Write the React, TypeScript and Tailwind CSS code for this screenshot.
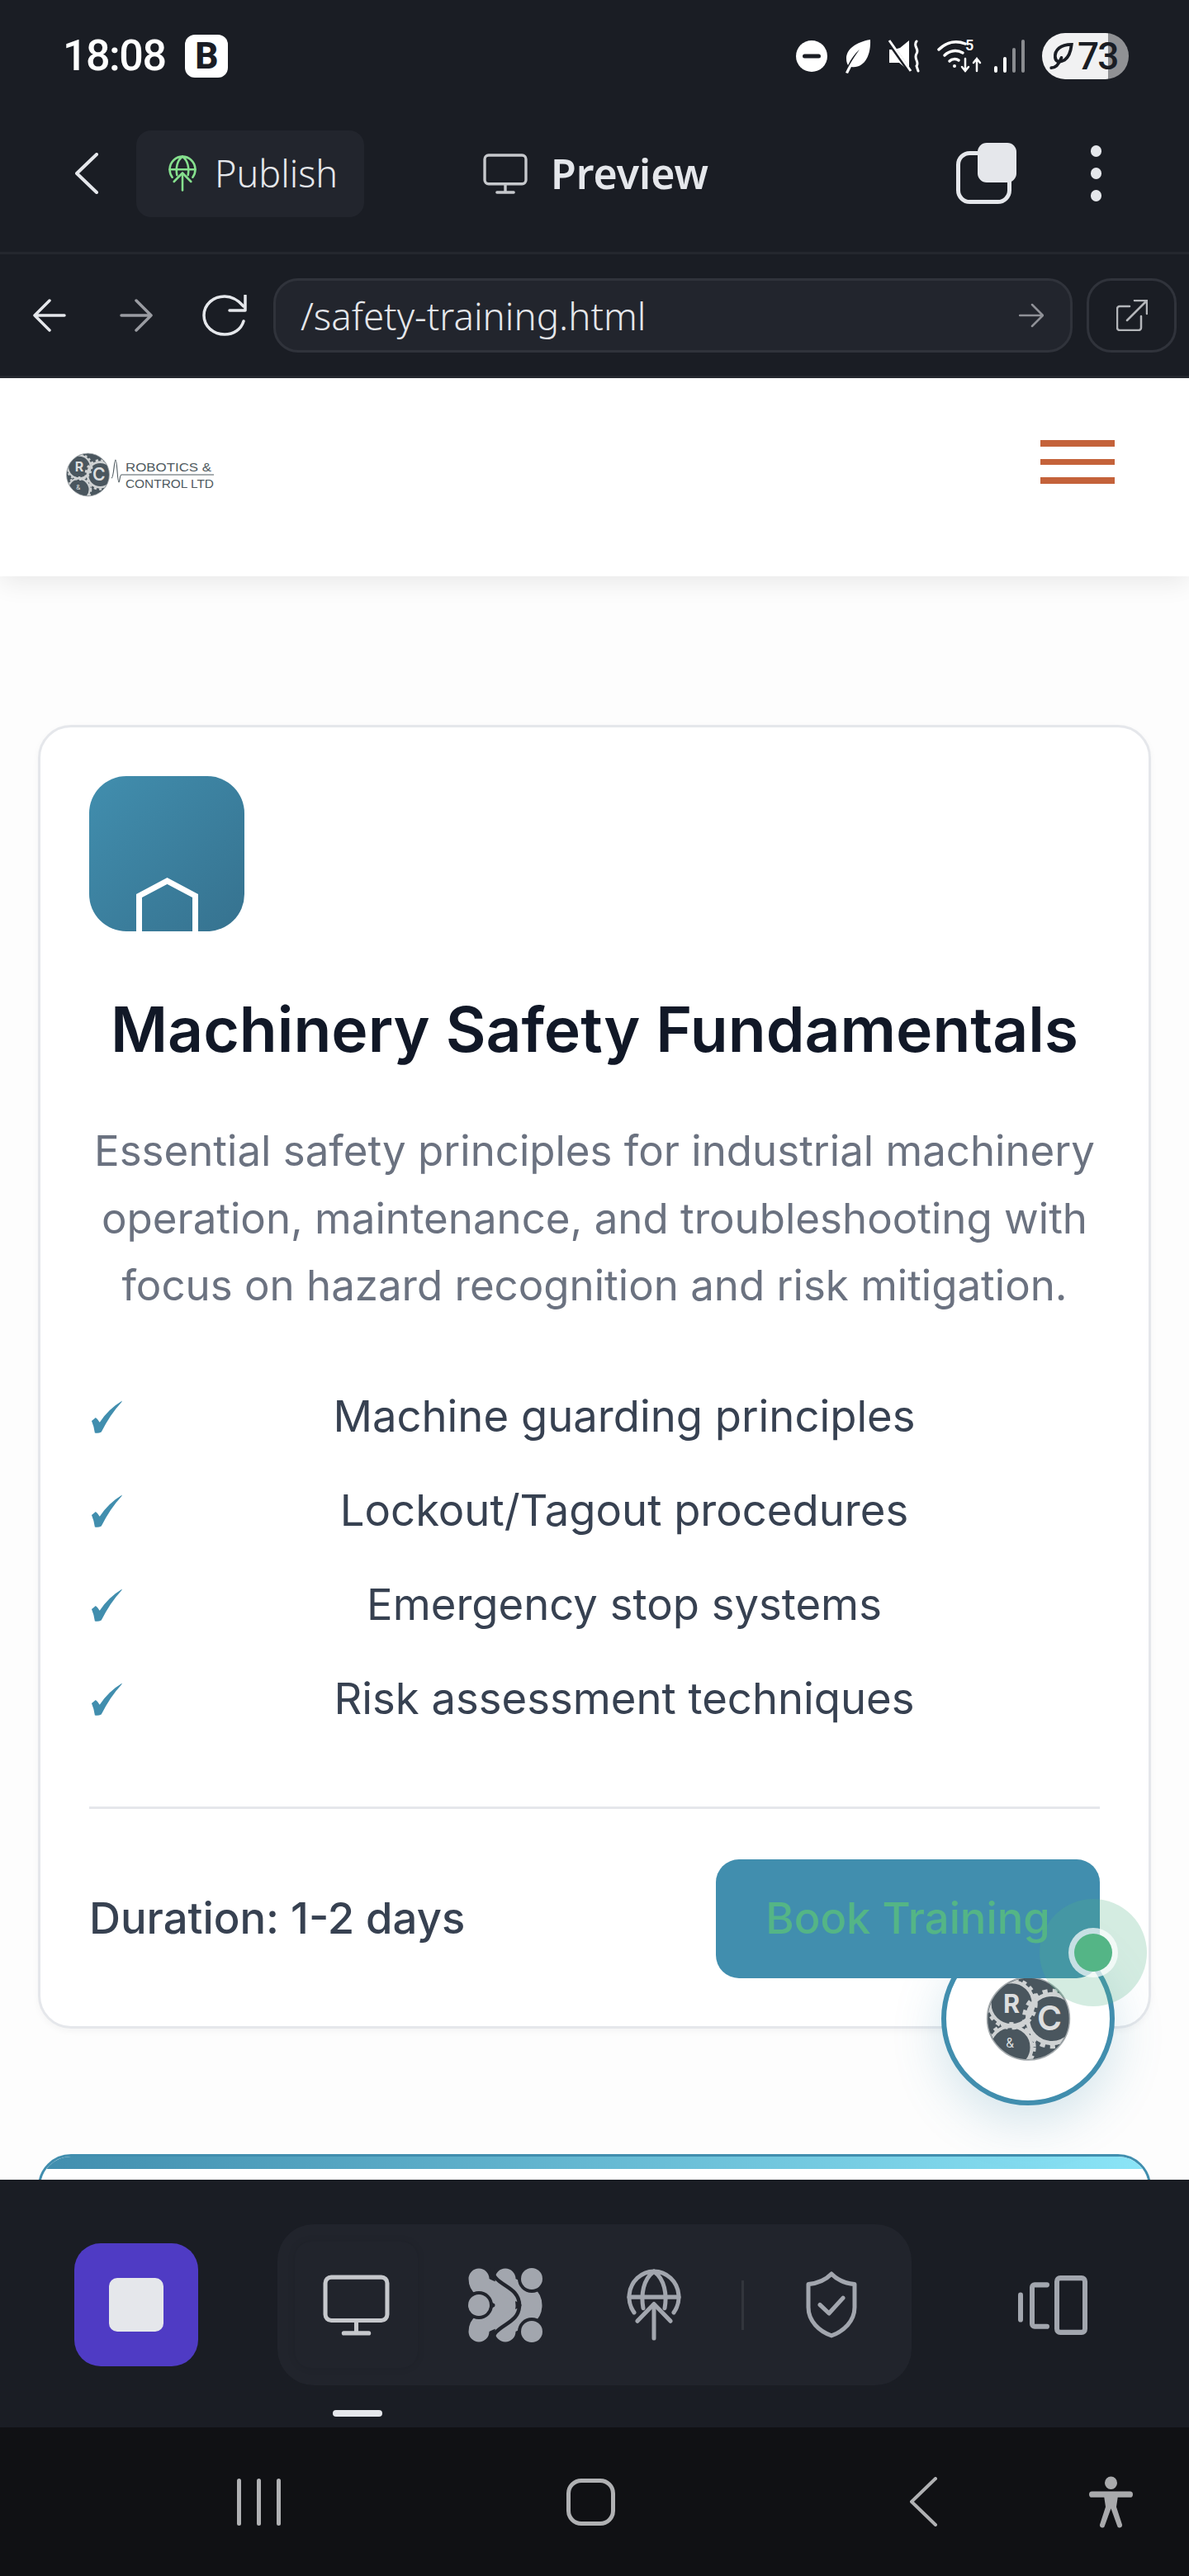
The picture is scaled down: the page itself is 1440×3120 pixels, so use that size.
import { useId } from 'react'

const features = [
  'Machine guarding principles',
  'Lockout/Tagout procedures',
  'Emergency stop systems',
  'Risk assessment techniques',
]

function LogoMark({ className }: { className: string }) {
  const clipId = useId()
  return (
    <svg viewBox="0 0 100 100" className={className}>
      <defs>
        <clipPath id={clipId}>
          <circle cx="50" cy="50" r="48" />
        </clipPath>
      </defs>
      <circle cx="50" cy="50" r="49" fill="#4a565e" stroke="#a5abae" strokeWidth="1.5" />
      <g fill="none" stroke="#cfd2d3" clipPath={`url(#${clipId})`}>
        <circle cx="30" cy="32" r="26" strokeWidth="4" />
        <circle cx="30" cy="32" r="29" strokeWidth="4" strokeDasharray="5 5" />
        <circle cx="29" cy="84" r="25" strokeWidth="4" />
        <circle cx="29" cy="84" r="28" strokeWidth="4" strokeDasharray="5 5" />
        <circle cx="78" cy="50" r="29" strokeWidth="5" />
        <circle cx="78" cy="50" r="33" strokeWidth="5" strokeDasharray="6 6" />
      </g>
      <text x="30" y="43" textAnchor="middle" fontFamily="Inter, sans-serif" fontWeight="700" fontSize="30" fill="#dcdedf">R</text>
      <text x="75" y="64" textAnchor="middle" fontFamily="Inter, sans-serif" fontWeight="600" fontSize="40" fill="#dcdedf">C</text>
      <text x="28" y="84" textAnchor="middle" fontFamily="Inter, sans-serif" fontSize="15" fill="#dcdedf">&amp;</text>
    </svg>
  )
}

function SiteLogo() {
  return (
    <div className="flex items-center">
      <LogoMark className="w-[53px] h-[56px]" />
      <svg viewBox="0 0 125 40" className="w-[125px] h-[40px] ml-[2px] overflow-visible">
        <path d="M0 24 C3 24 3 2 5 2 C7 2 7 29 9 29 C10 29 10 20 12 20 H124" fill="none" stroke="#4f5a60" strokeWidth="1.1" />
        <text x="17" y="16" fontFamily="'Liberation Sans', sans-serif" fontSize="15" fill="#4f5a60" textLength="104" lengthAdjust="spacingAndGlyphs">ROBOTICS &amp;</text>
        <text x="17" y="36" fontFamily="'Liberation Sans', sans-serif" fontSize="15" fill="#4f5a60" textLength="107" lengthAdjust="spacingAndGlyphs">CONTROL LTD</text>
      </svg>
    </div>
  )
}

function GlobeUp({ className, stroke }: { className: string; stroke: string }) {
  return (
    <svg viewBox="0 0 66 84" preserveAspectRatio="none" className={className} fill="none" stroke={stroke} strokeWidth={5} strokeLinecap="round" strokeLinejoin="round">
      <path d="M9 51 A30 30 0 1 1 57 51" />
      <path d="M33 3 C20 12 17 30 20 46" />
      <path d="M33 3 C46 12 49 30 46 46" />
      <path d="M3 33 H63" />
      <path d="M33 81 V42" />
      <path d="M13 61 L33 41 L53 61" />
    </svg>
  )
}

function Monitor({ className, stroke }: { className: string; stroke: string }) {
  return (
    <svg viewBox="0 0 80 72" preserveAspectRatio="none" className={className} fill="none" stroke={stroke} strokeWidth={5} strokeLinecap="round" strokeLinejoin="round">
      <rect x="3" y="3" width="74" height="51" rx="7" />
      <path d="M40 54 V68" />
      <path d="M25 69 H55" />
    </svg>
  )
}

function CheckGlyph() {
  return (
    <svg viewBox="0 0 40 40" className="w-[39px] h-[40px]" fill="#418eae">
      <path d="M1 25 L6 21 Q9 23 11 27 Q21 11 39 0 L38 2 Q24 17 13 39 Q9 41 5 40 Q4 32 1 25Z" />
    </svg>
  )
}

function StatusIcons() {
  return (
    <div className="flex items-center">
      <svg viewBox="0 0 38 38" className="w-[38px] h-[38px]">
        <circle cx="19" cy="19" r="19" fill="#fff" />
        <rect x="8" y="16.5" width="22" height="5" rx="2.5" fill="#1a1d24" />
      </svg>
      <svg viewBox="0 0 34 42" className="w-[34px] h-[42px] ml-[19px]" fill="#fff">
        <path d="M33 1 C16 4 4 12 4 24 C4 28 5 30 6 32 C10 24 14 18 20 13 C15 20 8 30 3 41 L6 42 L10 34 C26 36 34 20 33 1Z" />
      </svg>
      <svg viewBox="0 0 40 40" className="w-[40px] h-[40px] ml-[20px]" fill="none" stroke="#fff">
        <path d="M15 10 L26 1 V38 L14 28 H2 V12 H8Z" fill="#fff" stroke="none" />
        <path d="M1 2 L27 39" strokeWidth="5" stroke="#1a1d24" />
        <path d="M2 1 L28 38" strokeWidth="3" />
        <path d="M35 2 C30 8 39 11 35 17 C31 23 39 27 35 32 L37 38" strokeWidth="3" strokeLinecap="round" />
      </svg>
      <div className="relative w-[56px] h-[42px] ml-[20px]">
        <svg viewBox="0 0 56 42" className="w-[56px] h-[42px]" fill="none" stroke="#fff" strokeWidth="3.5" strokeLinecap="round">
          <path d="M2 13 C12 3 24 2 34 6" />
          <path d="M9 20 C15 14 24 13 31 17" />
          <path d="M15 27 C18 24 23 24 26 26" />
          <circle cx="21" cy="33" r="2" fill="#fff" stroke="none" />
          <path d="M34 24 V39 M30 34 L34 39 L38 34" strokeWidth="2.5" />
          <path d="M48 39 V24 M44 29 L48 24 L52 29" strokeWidth="2.5" />
        </svg>
        <span className="absolute left-[34px] top-[-4px] text-[18px] leading-[24px] font-semibold text-white font-['Roboto',sans-serif]">5</span>
      </div>
      <svg viewBox="0 0 38 40" className="w-[38px] h-[40px] ml-[13px]">
        <rect x="0" y="32" width="4" height="8" rx="2" fill="#fff" />
        <rect x="11" y="21" width="4" height="19" rx="2" fill="#fff" />
        <rect x="22" y="10" width="4" height="30" rx="2" fill="#8a8c90" />
        <rect x="33" y="0" width="4" height="40" rx="2" fill="#8a8c90" />
      </svg>
      <div className="flex items-center w-[105px] h-[56px] ml-[20px] rounded-full pl-[9px] bg-[linear-gradient(90deg,#f1f1f2_0%,#f1f1f2_76%,#909194_76%,#909194_100%)]">
        <svg viewBox="0 0 30 36" className="w-[29px] h-[34px]" fill="none" stroke="#1a1d24" strokeWidth="4" strokeLinecap="round">
          <path d="M28 3 C14 3 6 10 7 20 C8 26 14 26 19 23 C25 19 27 12 28 3Z" />
          <path d="M2 33 C8 33 12 28 15 20" />
        </svg>
        <span className="ml-[5px] text-[46px] leading-[56px] text-[#1a1d24] tracking-[-2px] font-['Roboto',sans-serif] font-medium">73</span>
      </div>
    </div>
  )
}

function DotsMark({ className }: { className: string }) {
  return (
    <svg viewBox="0 0 90 90" className={className}>
      <g fill="none" stroke="#a2a6ae" strokeWidth="25" strokeLinecap="round">
        <path d="M13 13 C13 32 45 24 45 45 C45 66 13 58 13 77" />
        <path d="M45 13 C45 32 77 24 77 45 C77 66 45 58 45 77" />
      </g>
      <path d="M29 0 C29 22 62 20 62 45 C62 70 29 68 29 90" fill="none" stroke="#21242c" strokeWidth="4.5" />
      <g fill="#21242c">
        <circle cx="13" cy="45" r="17" />
        <circle cx="77" cy="13" r="17" />
        <circle cx="77" cy="77" r="17" />
      </g>
      <g fill="#a2a6ae">
        <circle cx="13" cy="45" r="13" />
        <circle cx="77" cy="13" r="13" />
        <circle cx="77" cy="77" r="13" />
      </g>
    </svg>
  )
}

export default function App() {
  return (
    <div className="relative flex flex-col w-[1440px] h-[3120px] overflow-hidden bg-[#fdfdfd] font-['Inter',sans-serif]">
      {/* Top chrome */}
      <div className="bg-[#1a1d24] shrink-0 border-b-[3px] border-[#24272e]">
        <div className="flex items-start justify-between h-[115px] pl-[76px] pr-[73px] pt-[40px]">
          <div className="flex items-center h-[56px]">
            <span className="text-[52px] leading-[56px] font-medium text-white tracking-[-1.5px] font-['Roboto',sans-serif]">18:08</span>
            <span className="flex items-center justify-center w-[52px] h-[52px] ml-[24px] rounded-[12px] bg-white text-[44px] font-extrabold text-[#1a1d24] font-['Roboto',sans-serif]">B</span>
          </div>
          <StatusIcons />
        </div>

        <div className="flex items-center h-[193px] pl-[91px] pr-[106px] border-b-[3px] border-[#24272e]">
          <svg viewBox="0 0 28 50" className="w-[28px] h-[50px]" fill="none" stroke="#e5e7eb" strokeWidth="4" strokeLinecap="round" strokeLinejoin="round">
            <path d="M26 2 L2 25 L26 48" />
          </svg>
          <div className="flex items-center w-[276px] h-[105px] ml-[46px] pl-[39px] rounded-[18px] bg-[#22252d]">
            <GlobeUp className="w-[34px] h-[44px]" stroke="#86e08e" />
            <span className="ml-[22px] text-[45px] leading-[56px] text-[#e5e7eb] font-['Noto_Sans',sans-serif] font-light">Publish</span>
          </div>
          <Monitor className="w-[54px] h-[49px] ml-[144px]" stroke="#c6c8cc" />
          <span className="ml-[28px] text-[50px] leading-[60px] font-semibold text-[#e5e7eb] font-['Noto_Sans',sans-serif]">Preview</span>
          <svg viewBox="0 0 73 74" className="w-[73px] h-[74px] ml-auto" fill="none">
            <rect x="2.5" y="12.5" width="62" height="59" rx="14" stroke="#e5e7eb" strokeWidth="5" />
            <rect x="26" y="0" width="47" height="48" rx="11" fill="#e5e7eb" />
          </svg>
          <div className="flex flex-col gap-[13px] ml-[90px]">
            <span className="w-[13px] h-[14px] rounded-full bg-[#e5e7eb]" />
            <span className="w-[13px] h-[14px] rounded-full bg-[#e5e7eb]" />
            <span className="w-[13px] h-[14px] rounded-full bg-[#e5e7eb]" />
          </div>
        </div>

        <div className="flex items-center h-[147px] pl-[40px]">
          <svg viewBox="0 0 40 40" className="w-[40px] h-[40px]" fill="none" stroke="#e5e7eb" strokeWidth="3.5" strokeLinecap="round" strokeLinejoin="round">
            <path d="M38 20 H2 M20 2 L2 20 L20 38" />
          </svg>
          <svg viewBox="0 0 40 40" className="w-[40px] h-[40px] ml-[65px]" fill="none" stroke="#9a9ca2" strokeWidth="3.5" strokeLinecap="round" strokeLinejoin="round">
            <path d="M2 20 H38 M20 2 L38 20 L20 38" />
          </svg>
          <svg viewBox="0 0 56 50" className="w-[56px] h-[50px] ml-[60px]" fill="none" stroke="#e5e7eb" strokeWidth="3.5" strokeLinecap="round" strokeLinejoin="round">
            <path d="M50 32 C47 42 38 48 27 48 C13 48 2 38 2 25 C2 12 13 2 27 2 C36 2 44 7 50 14" />
            <path d="M52 1 V19 H33" />
          </svg>
          <div className="flex items-center w-[968px] h-[90px] ml-[30px] pl-[30px] pr-[32px] rounded-[30px] bg-[#22252d] border-[3px] border-[#30333b]">
            <span className="text-[45.7px] leading-[56px] text-[#e5e7eb] font-['Noto_Sans',sans-serif] font-light">/safety-training.html</span>
            <svg viewBox="0 0 30 30" className="w-[30px] h-[30px] ml-auto" fill="none" stroke="#8f9197" strokeWidth="2.5" strokeLinecap="round" strokeLinejoin="round">
              <path d="M1 15 H29 M16 2 L29 15 L16 28" />
            </svg>
          </div>
          <div className="flex items-center justify-center w-[109px] h-[90px] ml-[17px] rounded-[30px] border-[3px] border-[#30333b]">
            <svg viewBox="0 0 38 38" className="w-[38px] h-[38px]" fill="none" stroke="#b4b6ba" strokeWidth="2.5" strokeLinecap="round" strokeLinejoin="round">
              <path d="M16 8 H4 a3 3 0 0 0 -3 3 V34 a3 3 0 0 0 3 3 H27 a3 3 0 0 0 3 -3 V20" />
              <path d="M13 25 L36 2 M22 1 H37 V17" />
            </svg>
          </div>
        </div>
      </div>

      {/* Site page */}
      <div className="flex-1 min-h-0 overflow-hidden">
        <header className="relative flex items-center justify-between h-[240px] pl-[80px] pr-[90px] pb-[6px] bg-white shadow-[0_6px_30px_rgba(0,0,0,0.09)]">
          <SiteLogo />
          <div className="flex flex-col gap-[15px] mt-[-31px]">
            <span className="w-[90px] h-[8px] bg-[#c4623a]" />
            <span className="w-[90px] h-[7px] bg-[#c4623a]" />
            <span className="w-[90px] h-[8px] bg-[#c4623a]" />
          </div>
        </header>

        <main className="px-[46px] pt-[180px]">
          <section className="h-[1579px] px-[59px] pt-[59px] rounded-[40px] bg-white border-[3px] border-[#e5e7eb] shadow-[0_3px_8px_rgba(0,0,0,0.04)]">
            <div className="flex items-end justify-center w-[188px] h-[188px] rounded-[45px] overflow-hidden bg-gradient-to-br from-[#418eae] to-[#36728f]">
              <svg viewBox="0 0 75 65" className="w-[75px] h-[65px]" fill="none" stroke="#fff" strokeWidth="7">
                <path d="M3.5 65 V22 L37.5 4 L71.5 22 V65" />
              </svg>
            </div>
            <h2 className="mt-[71px] text-center text-[75px] leading-[96px] font-semibold text-[#111827]">Machinery Safety Fundamentals</h2>
            <p className="mt-[58px] text-center text-[51px] leading-[81.6px] text-[#6b7280]">
              Essential safety principles for industrial machinery operation, maintenance, and troubleshooting with focus on hazard recognition and risk mitigation.
            </p>
            <ul className="mt-[61px]">
              {features.map((feature) => (
                <li key={feature} className="flex items-center h-[114px] text-[52.6px] text-[#374151]">
                  <span className="w-[72px] shrink-0 pl-[2px]">
                    <CheckGlyph />
                  </span>
                  <span className="flex-1 text-center">{feature}</span>
                </li>
              ))}
            </ul>
            <div className="flex items-center justify-between mt-[73px] pt-[61px] border-t-[3px] border-[#e5e7eb]">
              <span className="text-[52.6px] font-medium text-[#374151]">Duration: 1-2 days</span>
              <button className="relative z-10 w-[465px] h-[144px] rounded-[28px] bg-[#418eae] text-[52.5px] font-medium text-[#54b586]">Book Training</button>
            </div>
          </section>

          <section className="relative h-[300px] mt-[152px] rounded-[40px] bg-white border-[3px] border-[#418eae] overflow-hidden">
            <div className="h-[15px] bg-gradient-to-r from-[#418eae] to-[#8be5f7]" />
          </section>
        </main>
      </div>

      {/* Floating assistant button */}
      <div className="absolute left-[1140px] top-[2340px] flex items-center justify-center w-[210px] h-[210px] rounded-full bg-white border-[6px] border-[#418eae] shadow-[0_20px_60px_rgba(65,142,174,0.22)]">
        <LogoMark className="w-[103px] h-[102px]" />
      </div>
      <div className="absolute z-20 left-[1259px] top-[2300px] flex items-center justify-center w-[130px] h-[130px] rounded-full bg-[rgba(84,181,134,0.25)]">
        <span className="w-[46px] h-[46px] rounded-full bg-[#54b586] shadow-[0_0_0_7px_rgba(255,255,255,0.7)]" />
      </div>

      {/* Bottom toolbar */}
      <div className="relative flex items-center shrink-0 h-[300px] pl-[90px] pt-[3px] bg-[#1a1d24]">
        <div className="flex items-center justify-center w-[150px] h-[149px] rounded-[32px] bg-[#4f3bc4]">
          <span className="w-[66px] h-[65px] rounded-[10px] bg-[#e5e7eb]" />
        </div>
        <div className="flex items-center w-[768px] h-[195px] ml-[96px] rounded-[44px] bg-[#21242c]">
          <div className="flex items-center justify-center w-[149px] h-[153px] ml-[21px] rounded-[20px] bg-[#21242c] shadow-[0_0_10px_rgba(0,0,0,0.1)]">
            <Monitor className="w-[81px] h-[74px]" stroke="#c6c8cc" />
          </div>
          <DotsMark className="w-[90px] h-[90px] ml-[61px]" />
          <GlobeUp className="w-[66px] h-[87px] ml-[102px]" stroke="#a2a6ae" />
          <span className="w-[3px] h-[60px] ml-[73px] bg-[#32353c]" />
          <svg viewBox="0 0 66 78" preserveAspectRatio="none" className="w-[66px] h-[81px] ml-[73px]" fill="none" stroke="#a2a6ae" strokeWidth="5" strokeLinecap="round" strokeLinejoin="round">
            <path d="M33 3 C26 10 16 14 5 15 V42 C5 58 18 70 33 75 C48 70 61 58 61 42 V15 C50 14 40 10 33 3Z" />
            <path d="M19 39 L30 49 L47 31" />
          </svg>
        </div>
        <svg viewBox="0 0 84 70" preserveAspectRatio="none" className="w-[84px] h-[72px] ml-[129px]" fill="none" stroke="#a2a6ae" strokeWidth="6" strokeLinecap="round" strokeLinejoin="round">
          <path d="M3 23 V52" />
          <path d="M35 11 H20 a3 3 0 0 0 -3 3 V57 a3 3 0 0 0 3 3 H35" />
          <rect x="47" y="3" width="34" height="64" rx="4" />
        </svg>
        <span className="absolute left-[403px] bottom-[13px] w-[60px] h-[8px] rounded-full bg-[#e5e7eb]" />
      </div>

      {/* Android nav bar */}
      <div className="flex items-center shrink-0 h-[180px] pl-[287px] bg-[#101114]">
        <div className="flex gap-[19px]">
          <span className="w-[5px] h-[57px] rounded-full bg-[#b0b1b3]" />
          <span className="w-[5px] h-[57px] rounded-full bg-[#b0b1b3]" />
          <span className="w-[5px] h-[57px] rounded-full bg-[#b0b1b3]" />
        </div>
        <span className="w-[59px] h-[57px] ml-[346px] rounded-[18px] border-[5px] border-[#b0b1b3]" />
        <svg viewBox="0 0 33 58" preserveAspectRatio="none" className="w-[33px] h-[60px] ml-[357px]" fill="none" stroke="#b0b1b3" strokeWidth="4" strokeLinecap="round" strokeLinejoin="round">
          <path d="M31 2 L2 29 L31 56" />
        </svg>
        <svg viewBox="0 0 53 61" preserveAspectRatio="none" className="w-[53px] h-[63px] ml-[184px]" fill="#a9aaac">
          <circle cx="26.5" cy="8" r="7.5" />
          <rect x="0" y="18" width="53" height="7" rx="3.5" />
          <path d="M18 23 H35 L33 36 L40 57 a3 3 0 0 1 -6 1 L26.5 38 L19 58 a3 3 0 0 1 -6 -1 L20 36 Z" />
        </svg>
      </div>
    </div>
  )
}
